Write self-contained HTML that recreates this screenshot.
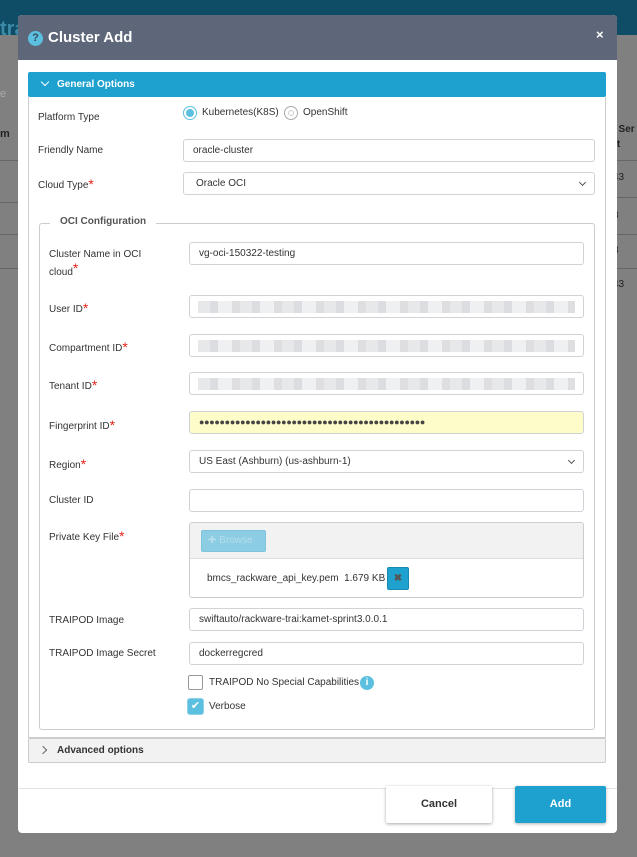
<!DOCTYPE html>
<html><head><meta charset="utf-8"><style>
*{box-sizing:border-box;margin:0;padding:0}
body{width:637px;height:857px;background:#808080;position:relative;overflow:hidden;font-family:"Liberation Sans",sans-serif;font-size:10px;color:#333}
.a{position:absolute}
.in{position:absolute;border:1px solid #cfd3d8;border-radius:3px;background:#fff;height:23px;padding:0 9px;line-height:21px;font-size:10px;color:#333}
.lb{position:absolute;font-size:10px;color:#333}
.st{color:#e2231a;font-size:14px;line-height:8px;vertical-align:top;position:relative;top:0px}
.blur{position:absolute;left:8px;right:8px;top:5px;height:12px;background:repeating-linear-gradient(90deg,#e4e5e8 0 12px,#d8d9dd 12px 20px,#eceef0 20px 34px,#dadbde 34px 42px);opacity:.9}
.chev{position:absolute;right:9px;top:7px;width:5px;height:5px;border-right:1px solid #555;border-bottom:1px solid #555;transform:rotate(45deg)}
</style></head><body>
<div class="a" style="left:0;top:0;width:637px;height:35px;background:#0f4d66"></div>
<div class="a" style="left:0;top:18px;color:#3c8aa8;font-size:20px;font-weight:bold">tra</div>
<div class="a" style="left:0;top:88px;color:#aaa;font-size:11px">e</div>
<div class="a" style="left:0;top:128px;color:#222;font-size:11px;font-weight:bold">m</div>
<div class="a" style="left:0;top:160px;width:18px;height:1px;background:#666"></div>
<div class="a" style="left:0;top:202px;width:18px;height:1px;background:#666"></div>
<div class="a" style="left:0;top:234px;width:18px;height:1px;background:#666"></div>
<div class="a" style="left:0;top:268px;width:18px;height:1px;background:#666"></div>
<div class="a" style="left:613px;top:122px;color:#222;font-size:10px;font-weight:bold;line-height:15px">l Ser<br>rt</div>
<div class="a" style="left:613px;top:172px;color:#222;font-size:10px">43</div>
<div class="a" style="left:613px;top:210px;color:#222;font-size:10px">3</div>
<div class="a" style="left:613px;top:245px;color:#222;font-size:10px">3</div>
<div class="a" style="left:613px;top:279px;color:#222;font-size:10px">43</div>
<div class="a" style="left:612px;top:160px;width:25px;height:1px;background:#666"></div>
<div class="a" style="left:612px;top:197px;width:25px;height:1px;background:#666"></div>
<div class="a" style="left:612px;top:234px;width:25px;height:1px;background:#666"></div>
<div class="a" style="left:612px;top:268px;width:25px;height:1px;background:#666"></div>

<div class="a" style="left:18px;top:15px;width:599px;height:818px;background:#fff;border-radius:4px;overflow:hidden">
 <div class="a" style="left:0;top:0;width:599px;height:45px;background:#5e6679"></div>
</div>
<div class="a" style="left:28px;top:31px;width:15px;height:15px;border-radius:50%;background:#5bc0e0;color:#364a5c;font-weight:bold;font-size:11px;text-align:center;line-height:15px">?</div>
<div class="a" style="left:48px;top:29px;color:#fff;font-size:15px;font-weight:bold">Cluster Add</div>
<div class="a" style="left:596px;top:27px;color:#fff;font-size:13px;font-weight:bold">×</div>

<div class="a" style="left:28px;top:72px;width:578px;height:25px;background:#1ea1ce;border-radius:2px"></div>
<div class="a" style="left:42px;top:79px;width:6px;height:6px;border-right:1.6px solid #fff;border-bottom:1.6px solid #fff;transform:rotate(45deg)"></div>
<div class="a" style="left:57px;top:79px;color:#fff;font-weight:bold;font-size:10px">General Options</div>
<div class="a" style="left:28px;top:97px;width:578px;height:641px;border:1px solid #ccc;border-top:none"></div>

<div class="lb" style="left:38px;top:112px">Platform Type</div>
<div class="a" style="left:183px;top:106px;width:14px;height:14px;border:1px solid #5bc0e0;border-radius:50%;background:#fff"><div class="a" style="left:2px;top:2px;width:8px;height:8px;border-radius:50%;background:#5bc0e0"></div></div>
<div class="lb" style="left:202px;top:107px">Kubernetes(K8S)</div>
<div class="a" style="left:284px;top:106px;width:14px;height:14px;border:1px solid #aaa;border-radius:50%;background:#fff"><div class="a" style="left:3px;top:3px;width:6px;height:6px;border-radius:50%;border:1px solid #ccc"></div></div>
<div class="lb" style="left:303px;top:107px">OpenShift</div>

<div class="lb" style="left:38px;top:145px">Friendly Name</div>
<div class="in" style="left:183px;top:139px;width:412px">oracle-cluster</div>
<div class="lb" style="left:38px;top:180px">Cloud Type<span class="st">*</span></div>
<div class="in" style="left:183px;top:172px;width:412px;padding-left:12px">Oracle OCI<div class="chev"></div></div>

<div class="a" style="left:39px;top:223px;width:556px;height:507px;border:1px solid #ccc;border-radius:3px"></div>
<div class="a" style="left:50px;top:216px;background:#fff;padding:0 10px;font-weight:bold;color:#555;font-size:10px">OCI Configuration</div>

<div class="lb" style="left:49px;top:246px;line-height:18px">Cluster Name in OCI<br>cloud<span class="st">*</span></div>
<div class="in" style="left:189px;top:242px;width:395px">vg-oci-150322-testing</div>
<div class="lb" style="left:49px;top:304px">User ID<span class="st">*</span></div>
<div class="in" style="left:189px;top:295px;width:395px"><div class="blur"></div></div>
<div class="lb" style="left:49px;top:343px">Compartment ID<span class="st">*</span></div>
<div class="in" style="left:189px;top:334px;width:395px"><div class="blur"></div></div>
<div class="lb" style="left:49px;top:381px">Tenant ID<span class="st">*</span></div>
<div class="in" style="left:189px;top:372px;width:395px"><div class="blur"></div></div>
<div class="lb" style="left:49px;top:421px">Fingerprint ID<span class="st">*</span></div>
<div class="in" style="left:189px;top:411px;width:395px;background:#fefcc8;letter-spacing:-0.3px;font-size:9px;color:#444">●●●●●●●●●●●●●●●●●●●●●●●●●●●●●●●●●●●●●●●●●●●●</div>
<div class="lb" style="left:49px;top:460px">Region<span class="st">*</span></div>
<div class="in" style="left:189px;top:450px;width:395px">US East (Ashburn) (us-ashburn-1)<div class="chev"></div></div>
<div class="lb" style="left:49px;top:495px">Cluster ID</div>
<div class="in" style="left:189px;top:489px;width:395px"></div>
<div class="lb" style="left:49px;top:532px">Private Key File<span class="st">*</span></div>
<div class="a" style="left:189px;top:522px;width:395px;height:76px;border:1px solid #ccc;border-radius:3px;background:#fff;overflow:hidden">
 <div class="a" style="left:0;top:0;width:395px;height:36px;background:#f2f2f2;border-bottom:1px solid #ddd"></div>
 <div class="a" style="left:11px;top:7px;width:65px;height:22px;background:#8ccde4;border:1px solid #7fc4de;border-radius:2px;color:#b5dded;font-size:10px;line-height:20px;padding-left:6px">✚ Browse</div>
 <div class="a" style="left:17px;top:50px;font-size:10px">bmcs_rackware_api_key.pem&nbsp; 1.679 KB</div>
 <div class="a" style="left:197px;top:44px;width:22px;height:23px;background:#1ea1ce;border:1px solid #1788b0;border-radius:2px;color:#555;font-weight:bold;text-align:center;line-height:21px;font-size:10px">✖</div>
</div>
<div class="lb" style="left:49px;top:615px">TRAIPOD Image</div>
<div class="in" style="left:189px;top:608px;width:395px">swiftauto/rackware-trai:kamet-sprint3.0.0.1</div>
<div class="lb" style="left:49px;top:648px">TRAIPOD Image Secret</div>
<div class="in" style="left:189px;top:642px;width:395px">dockerregcred</div>
<div class="a" style="left:188px;top:675px;width:15px;height:15px;border:1px solid #999;border-radius:2px;background:#fff"></div>
<div class="lb" style="left:209px;top:677px">TRAIPOD No Special Capabilities</div>
<div class="a" style="left:360px;top:676px;width:14px;height:14px;border-radius:50%;background:#5bc0e0;color:#fff;font-weight:bold;text-align:center;line-height:14px;font-size:10px">i</div>
<div class="a" style="left:187px;top:698px;width:17px;height:17px;border:1px solid #8fd0ea;border-radius:3px;background:#5bc0e0;color:#fff;text-align:center;line-height:15px;font-size:11px">✔</div>
<div class="lb" style="left:209px;top:701px">Verbose</div>

<div class="a" style="left:28px;top:738px;width:578px;height:25px;background:#f2f2f2;border:1px solid #ccc;border-radius:2px"></div>
<div class="a" style="left:40px;top:747px;width:6px;height:6px;border-right:1px solid #666;border-bottom:1px solid #666;transform:rotate(-45deg)"></div>
<div class="a" style="left:57px;top:745px;font-weight:bold;color:#333;font-size:10px">Advanced options</div>
<div class="a" style="left:18px;top:788px;width:599px;height:1px;background:#e2e2e2"></div>
<div class="a" style="left:386px;top:786px;width:106px;height:37px;background:#fff;border-radius:2px;box-shadow:0 1px 3px rgba(0,0,0,.35);text-align:center;line-height:37px;font-weight:bold;font-size:11px;color:#333">Cancel</div>
<div class="a" style="left:515px;top:786px;width:91px;height:37px;background:#1ea1ce;border-radius:2px;box-shadow:0 1px 3px rgba(0,0,0,.3);text-align:center;line-height:37px;font-weight:bold;font-size:11px;color:#fff">Add</div>
</body></html>
